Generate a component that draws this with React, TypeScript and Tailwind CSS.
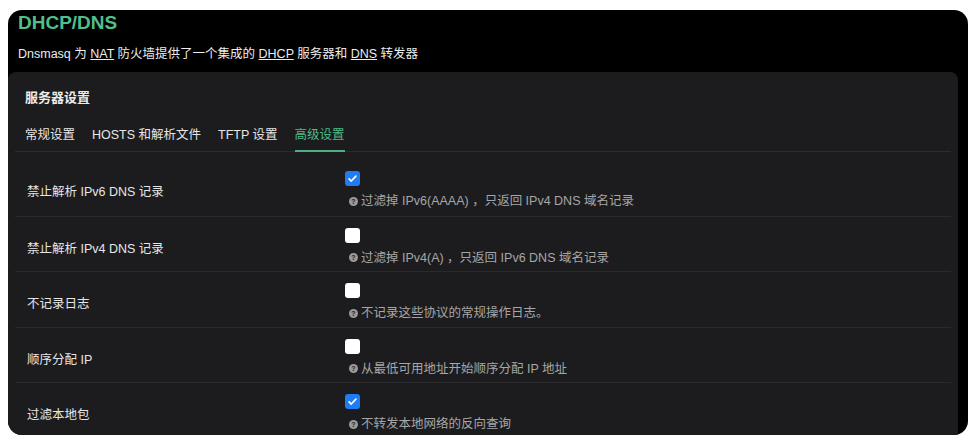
import React from "react";

type Row = { label: string; help: string; checked: boolean };

const rows: Row[] = [
  { label: "禁止解析 IPv6 DNS 记录", help: "过滤掉 IPv6(AAAA) ，只返回 IPv4 DNS 域名记录", checked: true },
  { label: "禁止解析 IPv4 DNS 记录", help: "过滤掉 IPv4(A) ，只返回 IPv6 DNS 域名记录", checked: false },
  { label: "不记录日志", help: "不记录这些协议的常规操作日志。", checked: false },
  { label: "顺序分配 IP", help: "从最低可用地址开始顺序分配 IP 地址", checked: false },
  { label: "过滤本地包", help: "不转发本地网络的反向查询", checked: true },
];

const tabs = ["常规设置", "HOSTS 和解析文件", "TFTP 设置", "高级设置"];

const Checkbox = ({ checked }: { checked: boolean }) =>
  checked ? (
    <span className="flex h-[15px] w-[15px] items-center justify-center rounded-[3px] bg-[#1f7cf5]">
      <svg viewBox="0 0 16 16" className="h-[11px] w-[11px]" fill="none">
        <path d="M3 8.5l3.2 3.2L13 4.5" stroke="#fff" strokeWidth="2.4" strokeLinecap="round" strokeLinejoin="round" />
      </svg>
    </span>
  ) : (
    <span className="block h-[15px] w-[15px] rounded-[3px] bg-white" />
  );

const HelpIcon = () => (
  <span className="flex h-[9px] w-[9px] items-center justify-center rounded-full bg-[#9a9a9a] text-[7px] leading-none font-bold text-[#1c1c1e]">
    ?
  </span>
);

export default function App() {
  return (
    <div
      className="min-h-screen bg-white pt-[10px] pl-2"
      style={{ fontFamily: '"Liberation Sans", "Noto Sans CJK SC", sans-serif' }}
    >
      <div className="flex h-[425px] w-[960px] flex-col overflow-hidden rounded-[14px] bg-black">
        <div className="px-[10px]">
          <h1 className="text-[19px] leading-[26px] font-semibold text-[#4fbf8b]">DHCP/DNS</h1>
          <p className="mt-[8px] mb-[8px] text-[12.5px] leading-[20px] text-[#ececec]">
            Dnsmasq 为 <u>NAT</u> 防火墙提供了一个集成的 <u>DHCP</u> 服务器和 <u>DNS</u> 转发器
          </p>
        </div>

        <div className="mr-[10px] flex-1 rounded-t-[8px] bg-[#1c1c1e] px-[7px]">
          <div className="pt-[16px] pl-[10px] text-[13px] leading-[20px] font-bold text-[#ececec]">
            服务器设置
          </div>

          <div className="mt-[17px] flex gap-[17px] border-b border-[#2c2c2e] pl-[10px]">
            {tabs.map((t, i) => (
              <div
                key={t}
                className={
                  i === 3
                    ? "-mb-px border-b-2 border-[#4cae82] pb-[5px] text-[12.5px] leading-[20px] text-[#4cbc88]"
                    : "-mb-px border-b-2 border-transparent pb-[5px] text-[12.5px] leading-[20px] text-[#e6e6e6]"
                }
              >
                {t}
              </div>
            ))}
          </div>

          <div className="pt-[8px]">
            {rows.map((r, i) => (
              <div
                key={r.label}
                className={
                  i === 0
                    ? "flex h-[55.5px] items-start"
                    : "flex h-[55.5px] items-start border-t border-[#2a2a2c]"
                }
              >
                <div className="w-[330px] shrink-0 pt-[22px] pl-[12px] text-[12.5px] leading-[20px] text-[#e6e6e6]">
                  {r.label}
                </div>
                <div className="flex flex-col pt-[11px]">
                  <Checkbox checked={r.checked} />
                  <div className="mt-[7px] flex items-center gap-[3px] pl-[4px] text-[12.5px] leading-[16px] text-[#a6a6a6]">
                    <HelpIcon />
                    <span>{r.help}</span>
                  </div>
                </div>
              </div>
            ))}
          </div>
        </div>
      </div>
    </div>
  );
}
